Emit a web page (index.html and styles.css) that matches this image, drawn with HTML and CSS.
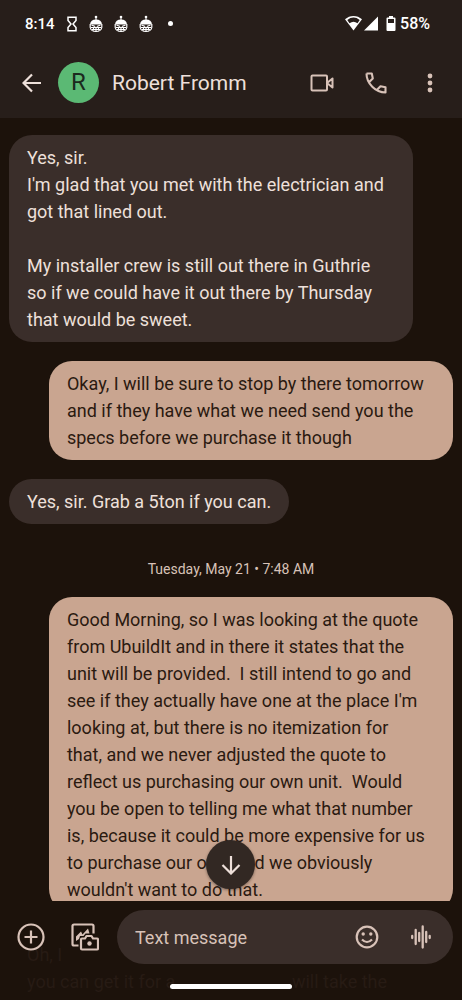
FILE: index.html
```html
<!DOCTYPE html>
<html lang="en">
<head>
<meta charset="utf-8">
<meta name="viewport" content="width=device-width, initial-scale=1">
<title>Robert Fromm</title>
<link rel="stylesheet" href="styles.css">
</head>
<body>
<div class="screen">
  <header class="top">
    <div class="status">
      <span class="clock">8:14</span>
      <svg class="glass" width="10" height="16" viewBox="0 0 10 16" fill="none" stroke="currentColor" stroke-width="1.5"><path d="M1 1.200h8v3.300L6 8l3 3.500v3.300H1v-3.300L4 8 1 4.500z"/></svg>
      <svg class="bot" width="14" height="18" viewBox="0 0 14 18"><use href="#bot"/></svg>
      <svg class="bot" width="14" height="18" viewBox="0 0 14 18"><use href="#bot"/></svg>
      <svg class="bot" width="14" height="18" viewBox="0 0 14 18"><use href="#bot"/></svg>
      <span class="more-dot"></span>
      <span class="signals">
        <svg width="17" height="15" viewBox="0 0 17 15"><path fill="currentColor" d="M8.500 0C5.300 0 2.400 1.200 0 3.300L8.500 14.500 17 3.300C14.600 1.200 11.700 0 8.500 0z"/><path fill="#271e1a" d="M2.300 4Q8.500-.8 14.700 4L12.500 7.200Q8.500 4.200 4.500 7.200z"/></svg>
        <svg width="14" height="15" viewBox="0 0 14 15"><path fill="currentColor" d="M14 .5v14H0z"/></svg>
        <svg class="battery" width="10" height="15" viewBox="0 0 10 15"><path fill="currentColor" fill-rule="evenodd" d="M3 0h4v1.500h1.500Q9.500 1.500 9.500 2.500V14q0 1-1 1h-7q-1 0-1-1V2.500q0-1 1-1H3zM2 3v4h6V3z"/></svg>
        <span class="percent">58%</span>
      </span>
    </div>
    <div class="appbar">
      <button class="icon back" aria-label="Back"><svg width="20" height="20" viewBox="0 0 20 20" fill="none" stroke="currentColor" stroke-width="2.200"><path d="M19 10H2.500M10 1.500 1.500 10 10 18.500"/></svg></button>
      <span class="avatar">R</span>
      <h1 class="name">Robert Fromm</h1>
      <div class="actions">
        <button class="icon" aria-label="Video call"><svg width="24" height="18" viewBox="0 0 24 18" fill="none" stroke="currentColor" stroke-width="2" stroke-linejoin="round"><rect x="1.500" y="1.500" width="15.500" height="15" rx="1"/><path d="m17 9 5.500-4.500v9z"/></svg></button>
        <button class="icon" aria-label="Call"><svg width="22" height="22" viewBox="0 0 22 22" fill="none" stroke="currentColor" stroke-width="2.100" stroke-linejoin="round"><path d="M1.500 1.500H6.800l1 5-3.300 3.200M1.500 1.500C1.500 11.500 10.500 20.500 20.500 20.500v-5.300l-5-1-3.200 3.300"/></svg></button>
        <button class="icon" aria-label="More options"><svg width="6" height="20" viewBox="0 0 6 20" fill="currentColor"><circle cx="3" cy="3" r="2.400"/><circle cx="3" cy="10" r="2.400"/><circle cx="3" cy="17" r="2.400"/></svg></button>
      </div>
    </div>
  </header>
  <main class="thread">
    <p class="bubble in wide">Yes, sir.<br>I'm glad that you met with the electrician and<br>got that lined out.<br><br>My installer crew is still out there in Guthrie<br>so if we could have it out there by Thursday<br>that would be sweet.</p>
    <p class="bubble out wide">Okay, I will be sure to stop by there tomorrow<br>and if they have what we need send you the<br>specs before we purchase it though</p>
    <p class="bubble in">Yes, sir. Grab a 5ton if you can.</p>
    <time class="stamp">Tuesday, May 21 • 7:48 AM</time>
    <p class="bubble out wide">Good Morning, so I was looking at the quote<br>from UbuildIt and in there it states that the<br>unit will be provided.&nbsp; I still intend to go and<br>see if they actually have one at the place I'm<br>looking at, but there is no itemization for<br>that, and we never adjusted the quote to<br>reflect us purchasing our own unit.&nbsp; Would<br>you be open to telling me what that number<br>is, because it could be more expensive for us<br>to purchase our own and we obviously<br>wouldn't want to do that.</p>
  </main>
  <footer class="bottom">
    <div class="faded">
      <span>Oh, I</span><span></span>
      <span>you can get it for a</span><span>will take the</span>
    </div>
    <button class="jump" aria-label="Scroll to latest"><svg width="20" height="20" viewBox="0 0 20 20" fill="none" stroke="currentColor" stroke-width="2.200"><path d="M10 1v16.500M1.500 10l8.500 8.500 8.500-8.500"/></svg></button>
    <form class="composer">
      <button type="button" class="icon" aria-label="Add"><svg width="28" height="28" viewBox="0 0 28 28" fill="none" stroke="currentColor" stroke-width="2.200"><circle cx="14" cy="14" r="12.500"/><path d="M14 7.500v13M7.500 14h13"/></svg></button>
      <button type="button" class="icon" aria-label="Gallery"><svg width="28" height="28" viewBox="0 0 28 28" fill="none" stroke="currentColor" stroke-width="2.200" stroke-linejoin="round"><path d="M22.500 10.500V3q0-1.500-1.500-1.500H3Q1.500 1.500 1.500 3v18q0 1.500 1.500 1.500h4.500"/><path fill="currentColor" stroke="none" d="M5 18v-4.500l5-5 1.500 3L17 5.500l1.500 5h-4L12.500 13H9l-1 3z"/><path d="M11 15.500h3l1.500-2.500h5l1.500 2.500h4q1 0 1 1v9q0 1-1 1H11q-1 0-1-1v-9q0-1 1-1z"/><circle cx="18.500" cy="20.500" r="2.200" fill="currentColor" stroke="none"/></svg></button>
      <div class="field">
        <input class="text" type="text" placeholder="Text message" aria-label="Text message">
        <button type="button" class="icon" aria-label="Emoji"><svg width="24" height="24" viewBox="0 0 24 24" fill="none" stroke="currentColor" stroke-width="2.200"><circle cx="12" cy="12" r="10.300"/><path d="M7 14.500q5 5 10 0"/><g fill="currentColor" stroke="none"><circle cx="8.200" cy="9" r="1.700"/><circle cx="15.800" cy="9" r="1.700"/></g></svg></button>
        <button type="button" class="icon" aria-label="Voice message"><svg width="20" height="24" viewBox="0 0 20 24" fill="none" stroke="currentColor" stroke-width="2.300" stroke-linecap="round"><path d="M1.200 11v2M4.700 5v14M8.200 8v8M11.700 1.500v21M15.200 7v10M18.700 11v2"/></svg></button>
      </div>
    </form>
    <div class="handle"></div>
  </footer>
</div>
<svg width="0" height="0" class="defs"><defs><g id="bot">
  <circle cx="7" cy="2" r="1.300" fill="#fff"/><path stroke="#fff" d="M7 2v3"/>
  <path fill="#fff" d="M1 9.500Q1.500 4.500 7 4.500t6 5z"/>
  <path fill="none" stroke="#fff" stroke-width="1.200" d="M1.200 9v3.500Q2 16.500 7 16.500t5.800-4V9"/>
  <path stroke="#fff" stroke-width="1.200" d="M2.500 10 6.200 11.500M11.500 10 7.800 11.500M2 12.500h10M3 14.500h8M4.500 12.500v3M7 12.500v4M9.500 12.500v3"/>
</g></defs></svg>
</body>
</html>
```
FILE: styles.css
```css
* { box-sizing: border-box; }
body {
  margin: 0;
  background: #1c120b;
  color: #eee0da;
  font-family: Roboto, "Open Sans", sans-serif;
}
button {
  border: 0;
  padding: 0;
  background: none;
  color: inherit;
  font: inherit;
}
svg { display: block; flex: none; }
.defs { position: absolute; }
.screen {
  display: flex;
  flex-direction: column;
  height: 100vh;
  overflow: hidden;
}
.top { flex: none; background: #271e1a; }
.status {
  display: flex;
  align-items: center;
  height: 47px;
  padding: 0 32px 0 25px;
  color: #fff;
  font-size: 16px;
  font-weight: 500;
}
.clock { font-size: 15px; }
.glass { margin: 0 12px; }
.bot { margin-right: 11px; }
.more-dot {
  width: 5px;
  height: 5px;
  margin-left: 4px;
  border-radius: 50%;
  background: #fff;
}
.signals {
  display: flex;
  align-items: center;
  gap: 2px;
  margin-left: auto;
}
.battery { margin-left: 6px; }
.percent { margin-left: 2px; }
.appbar {
  display: flex;
  align-items: center;
  height: 71px;
  padding: 0 20px 0 22px;
}
.icon { flex: none; color: #d8c2b8; }
.back { color: #eee0da; }
.avatar {
  width: 41px;
  height: 41px;
  margin: 0 13px 0 16px;
  border-radius: 50%;
  background: #5bb974;
  color: #1b2a1e;
  font-size: 24px;
  line-height: 41px;
  text-align: center;
}
.name {
  margin: 0;
  font-size: 21px;
  font-weight: 400;
}
.actions {
  display: flex;
  align-items: center;
  gap: 30px;
  margin-left: auto;
}
.actions .icon {
  display: grid;
  place-items: center;
  width: 24px;
  height: 24px;
}
.thread {
  display: flex;
  flex: 1;
  flex-direction: column;
  min-height: 0;
  overflow: hidden;
  padding: 17px 9px 0;
}
.bubble {
  flex: none;
  max-width: 91%;
  margin: 0 0 19px;
  padding: 9px 18px;
  border-radius: 23px;
  font-size: 18px;
  line-height: 27px;
}
.wide { width: 91%; }
.in { align-self: flex-start; background: #3a2e2a; }
.out { align-self: flex-end; background: #c9a590; color: #2b1a10; }
.stamp {
  flex: none;
  margin: 16px 0 18px;
  color: #d8c2b8;
  font-size: 14px;
  line-height: 20px;
  text-align: center;
}
.bottom {
  position: relative;
  flex: none;
  padding: 9px 9px 11px;
}
.faded {
  position: absolute;
  inset: auto 75px 5px 27px;
  display: grid;
  grid-template-columns: 1fr auto;
  color: #271b14;
  font-size: 18px;
  line-height: 27px;
}
.jump {
  position: absolute;
  bottom: 111px;
  left: 50%;
  display: grid;
  place-items: center;
  width: 49px;
  height: 49px;
  margin-left: -25px;
  border-radius: 50%;
  background: #322823;
  box-shadow: 0 1px 3px #0006;
}
.composer {
  position: relative;
  display: flex;
  align-items: center;
  gap: 26px;
  padding-left: 8px;
}
.field {
  display: flex;
  flex: 1;
  align-items: center;
  gap: 32px;
  min-width: 0;
  height: 54px;
  margin-left: -8px;
  padding: 0 22px 0 18px;
  border-radius: 27px;
  background: #3a2e2a;
}
.text {
  flex: 1;
  min-width: 0;
  padding: 0;
  border: 0;
  outline: 0;
  background: none;
  color: #eee0da;
  font: inherit;
  font-size: 18px;
}
.text::placeholder { color: #d8c2b8; opacity: 1; }
.handle {
  position: relative;
  width: 122px;
  height: 5px;
  margin: 20px auto 0;
  border-radius: 3px;
  background: #fff;
}
```
